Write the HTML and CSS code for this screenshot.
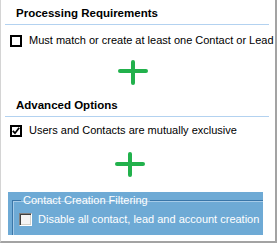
FILE: index.html
```html
<!DOCTYPE html>
<html lang="en">
<head>
    <meta charset="UTF-8">
    <meta name="viewport" content="width=device-width, initial-scale=1.0">
    <title>Processing Options</title>
    <link rel="stylesheet" href="styles.css">
</head>
<body>
    <div class="frame">
        <div class="section-title">Processing Requirements</div>
        <label class="check-row">
            <span class="box"></span>
            <span>Must match or create at least one Contact or Lead</span>
        </label>
        <div class="add add-first">
            <svg width="30" height="25" viewBox="0 0 30 25">
                <line x1="2" y1="11" x2="28" y2="11"/>
                <line x1="15" y1="2" x2="15" y2="23"/>
            </svg>
        </div>

        <div class="section-title second">Advanced Options</div>
        <label class="check-row">
            <span class="box">
                <svg width="8" height="8" viewBox="0 0 8 8">
                    <polyline points="0.8,3.8 3,6.2 7.2,0.8"/>
                </svg>
            </span>
            <span>Users and Contacts are mutually exclusive</span>
        </label>
        <div class="add add-second">
            <svg width="30" height="25" viewBox="0 0 30 25">
                <line x1="2" y1="12" x2="28" y2="12"/>
                <line x1="15" y1="2" x2="15" y2="23"/>
            </svg>
        </div>

        <div class="panel">
            <fieldset class="filter-group">
                <legend>Contact Creation Filtering</legend>
                <label class="check-row sunken-row">
                    <span class="box sunken"></span>
                    <span>Disable all contact, lead and account creation</span>
                </label>
            </fieldset>
        </div>
    </div>
</body>
</html>
```

FILE: styles.css
```css
body {
    margin: 0;
    background-color: #ffffff;
    font-family: "Liberation Sans", Arial, sans-serif;
    font-size: 11px;
    color: #000000;
}
.frame {
    width: 277px;
    height: 243px;
    box-sizing: border-box;
    border-left: 1px solid #d4d4d4;
    border-right: 2px solid #a3a3a3;
    border-bottom: 2px solid #a3a3a3;
    overflow: hidden;
}
.section-title {
    margin: 0 6px 0 4px;
    padding: 6px 0 4px 11px;
    font-size: 11.5px;
    font-weight: bold;
    line-height: 14px;
    border-bottom: 1px solid #b3d2f0;
}
.section-title.second {
    margin-top: 7px;
}
.check-row {
    display: flex;
    align-items: center;
    gap: 7px;
    margin: 9px 0 0 9px;
    line-height: 13px;
    white-space: nowrap;
}
.section-title.second + .check-row {
    margin-top: 7px;
}
.box {
    width: 12px;
    height: 12px;
    box-sizing: border-box;
    border: 2px solid #000000;
    background-color: #ffffff;
    display: flex;
    align-items: center;
    justify-content: center;
    flex: none;
}
.box polyline {
    fill: none;
    stroke: #000000;
    stroke-width: 1.8;
}
.add {
    height: 25px;
    margin-top: 13px;
}
.add svg {
    display: block;
}
.add line {
    stroke: #22b14c;
    stroke-width: 4;
    stroke-linecap: round;
}
.add-first {
    margin-left: 117px;
}
.add-second {
    margin-top: 15px;
    margin-left: 114px;
}
.panel {
    margin: 15px 0 0 7px;
    width: 255px;
    height: 43px;
    background-color: #6eaad5;
    overflow: hidden;
}
.filter-group {
    margin: 1px 0 0 4px;
    padding: 0 0 10px 8px;
    width: 290px;
    border: 1px solid #3a76a8;
    box-shadow: inset 1px 1px 0 #a6cbe8;
    color: #ffffff;
}
.filter-group legend {
    padding: 0 2px;
    line-height: 14px;
}
.sunken-row {
    margin: 6px 0 0 -2px;
    gap: 6px;
}
.box.sunken {
    width: 13px;
    height: 13px;
    border: 1px solid;
    border-color: #808080 #ffffff #ffffff #808080;
    box-shadow: inset 1px 1px 0 #404040, inset -1px -1px 0 #d4d0c8;
    background-color: #f4f4f4;
}
```
